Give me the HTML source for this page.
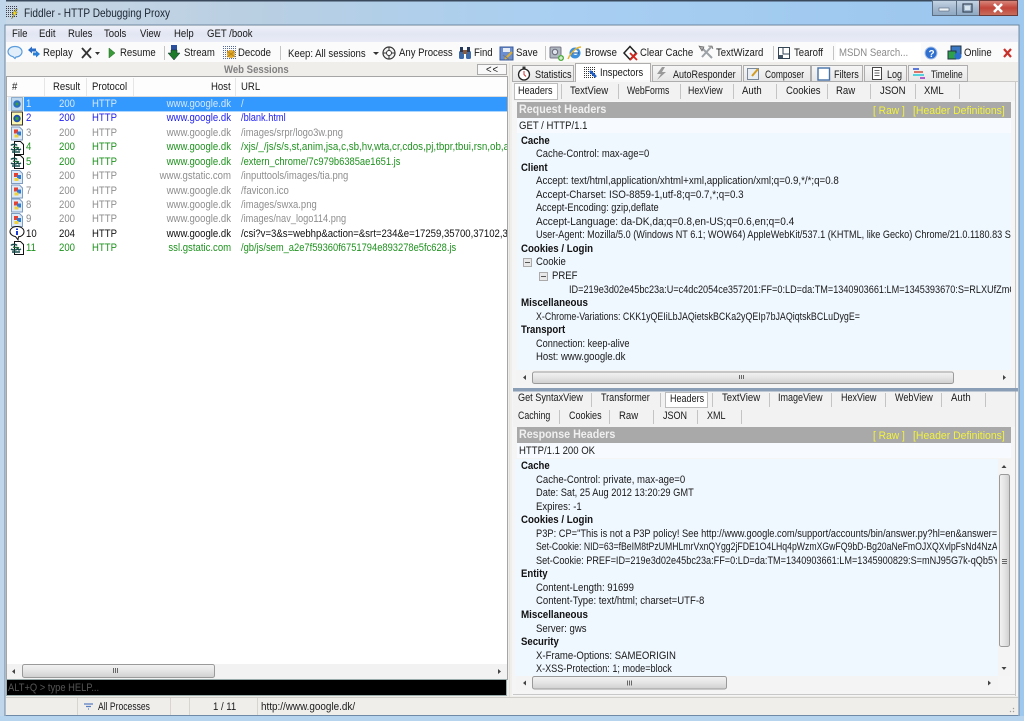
<!DOCTYPE html>
<html><head><meta charset="utf-8"><title>Fiddler - HTTP Debugging Proxy</title>
<style>
html,body{margin:0;padding:0;width:1024px;height:721px;overflow:hidden;background:#a9cdee}
#p{position:relative;width:1024px;height:721px;overflow:hidden;filter:blur(.35px);font-family:"Liberation Sans",sans-serif;font-size:11px;color:#1a1a1a}
svg.bg{position:absolute;left:0;top:0}
.t{position:absolute;white-space:nowrap;line-height:14px;height:14px;transform-origin:0 50%;transform:scaleX(.87)}
.r{transform-origin:100% 50%;text-align:right}
.b{font-weight:bold;color:#111}
.c{position:absolute;left:0;top:0;width:1024px;height:721px}
.w{color:#d4e8ff}.u{color:#2222ee}.g{color:#8e8e8e}.n{color:#1f921f}.k{color:#111}
.y{color:#f2f23c}.h{color:#f0f0f0;font-weight:bold;font-size:11.5px}
</style></head><body><div id="p">
<svg class="bg" width="1024" height="721" viewBox="0 0 1024 721">
<defs>
<linearGradient id="tb" x1="0" y1="0" x2="1" y2="0"><stop offset="0" stop-color="#c9d8e6"/><stop offset=".25" stop-color="#b9cfe2"/><stop offset=".55" stop-color="#a8cff2"/><stop offset="1" stop-color="#9cc6ee"/></linearGradient>
<linearGradient id="mn" x1="0" y1="0" x2="0" y2="1"><stop offset="0" stop-color="#eff1f9"/><stop offset=".5" stop-color="#e2e6f3"/><stop offset="1" stop-color="#e9ecf6"/></linearGradient>
<linearGradient id="sc" x1="0" y1="0" x2="0" y2="1"><stop offset="0" stop-color="#f3f3f3"/><stop offset=".5" stop-color="#e4e4e4"/><stop offset="1" stop-color="#cfcfcf"/></linearGradient>
<linearGradient id="sv" x1="0" y1="0" x2="1" y2="0"><stop offset="0" stop-color="#f3f3f3"/><stop offset=".5" stop-color="#e4e4e4"/><stop offset="1" stop-color="#cfcfcf"/></linearGradient>
<linearGradient id="cl" x1="0" y1="0" x2="0" y2="1"><stop offset="0" stop-color="#d98a80"/><stop offset=".5" stop-color="#c2453a"/><stop offset="1" stop-color="#c8705f"/></linearGradient>
<linearGradient id="bt" x1="0" y1="0" x2="0" y2="1"><stop offset="0" stop-color="#c5d5e5"/><stop offset=".5" stop-color="#a5b9cf"/><stop offset="1" stop-color="#8ea7c2"/></linearGradient>
<linearGradient id="tabg" x1="0" y1="0" x2="0" y2="1"><stop offset="0" stop-color="#f6f6f6"/><stop offset="1" stop-color="#e6e6e6"/></linearGradient>
<symbol id="doc" viewBox="0 0 12 14"><path d="M.5.500h8l3 3v10h-11z" fill="#dce9f7" stroke="#7d9cc2"/><rect x="3" y="3" width="4" height="4" fill="#e8402c"/><rect x="6" y="5" width="4" height="4" fill="#2a7ad8"/><rect x="3.500" y="8" width="4" height="3" fill="#f0d23a"/></symbol>
<symbol id="js" viewBox="0 0 14 14"><path d="M4.500.500h6l3 3v10h-9z" fill="#fff" stroke="#111"/><path d="M1 4.500c1-1.500 5-1.500 6 0M1 8c2 1.500 5 1 7 0M7 7l2 2 2-1M2 11h8" fill="none" stroke="#164a4a" stroke-width="1.500"/><path d="M3 6c2 1 4 0 6 1" stroke="#1f6a3a" fill="none" stroke-width="1.500"/></symbol>
</defs>
<!-- window frame -->
<rect width="1024" height="721" fill="#a9cdee"/>
<rect width="1024" height="26" fill="url(#tb)"/>
<rect width="1024" height="1.500" fill="#3a4a5c"/>
<rect x="0" y="0" width="6" height="721" fill="#c0d6ea"/>
<rect x="1018" y="0" width="6" height="721" fill="#9fc8ee"/>
<rect x="5" y="25" width="1014" height="691" fill="#f0eeeb" stroke="#6e88a2"/>
<rect x="0" y="716" width="1024" height="5" fill="#b6d4ee"/>
<!-- caption buttons -->
<rect x="932.500" y=".5" width="24" height="15" fill="url(#bt)" stroke="#5d6f84"/>
<rect x="956.500" y=".5" width="23" height="15" fill="url(#bt)" stroke="#5d6f84"/>
<rect x="979.500" y=".5" width="38" height="15" fill="url(#cl)" stroke="#6d3a3a"/>
<rect x="939" y="8" width="10" height="3" fill="#eef3f8" stroke="#55657a" stroke-width=".6"/>
<rect x="963" y="4" width="9" height="8" fill="none" stroke="#39485a" stroke-width="1.200"/><rect x="965" y="6" width="5" height="4" fill="#d8e4ee"/>
<path d="M994 4l8 8M1002 4l-8 8" stroke="#fff" stroke-width="2.600"/>
<!-- title icon -->
<path d="M6 6.500h12M6 8.500h12M6 10.500h12M6 12.500h12M6 14.500h12M6 16.500h12" stroke="#3c3c4c" stroke-dasharray="1 1"/>
<path d="M16 9l-4 5h2l-2.500 5 6-7h-2.500l2.500-3z" fill="#f6d814" stroke="#554" stroke-width=".4"/>
<!-- menu + toolbar -->
<rect x="6" y="26" width="1012" height="16" fill="url(#mn)"/>
<rect x="6" y="42" width="1012" height="20" fill="#fbfbfb"/>
<rect x="6" y="62" width="1012" height="2" fill="#f0eeeb"/>
<path d="M164.500 46v14M280.500 46v14M545.500 46v14M773.500 46v14M833.500 46v14" stroke="#c4c4c4"/>
<rect x="836" y="43" width="85" height="19" fill="#fff"/>
<!-- toolbar icons -->
<path d="M15 46.500c4 0 7 2.300 7 5.300s-3 5.200-6 5.200l-1 1.500-2-1.800c-3-.8-5-2.500-5-4.900 0-3 3-5.300 7-5.300z" fill="#e2effb" stroke="#5b9cdc" stroke-width="1.200"/>
<path d="M28 50l4-3.500v2h4v3h-4v2z" fill="#2a6ec8"/><path d="M40 54l-4 3.500v-2h-3v-3h3v-2z" fill="#2a80d8"/>
<path d="M82 48l9 10M91 48l-9 10" stroke="#333" stroke-width="1.800"/>
<path d="M95 52h5l-2.500 3z" fill="#333"/>
<path d="M109 48l6 5-6 5z" fill="#3a9a3a" stroke="#1f6b1f" stroke-width=".5"/>
<rect x="171" y="45" width="6" height="5" fill="#2a4f9c"/><path d="M171 50h6v3h3l-6 7-6-7h3z" fill="#1d7a2a" stroke="#123" stroke-width=".5"/>
<path d="M223 46.500h13M223 48.500h13M223 50.500h13M223 52.500h13M223 54.500h13M223 56.500h13M223 58.500h13" stroke="#56699c" stroke-dasharray="1 1"/><circle cx="231" cy="54" r="4" fill="#e2a82a"/><path d="M227 51l8 6M235 51l-8 6" stroke="#b88412"/>
<path d="M373 52h6l-3 3z" fill="#333"/>
<circle cx="389" cy="53" r="6" fill="#f4f4f4" stroke="#333" stroke-width="1.200"/><path d="M389 47v12M383 53h12" stroke="#333"/><circle cx="389" cy="53" r="2.500" fill="#fff" stroke="#333"/>
<rect x="459" y="51" width="5" height="8" rx="1.500" fill="#3f6aa8"/><rect x="466" y="51" width="5" height="8" rx="1.500" fill="#3f6aa8"/><rect x="460" y="47" width="3" height="5" fill="#26385a"/><rect x="467" y="47" width="3" height="5" fill="#26385a"/><rect x="463" y="50" width="4" height="4" fill="#8a5a3a"/>
<rect x="500" y="47" width="13" height="13" fill="#6a8ed0" stroke="#3a5a9a"/><rect x="503" y="48" width="7" height="4" fill="#e6ecf6"/><path d="M505 59l7-7" stroke="#e0b030" stroke-width="2"/><path d="M503 55l7 5" stroke="#777"/>
<rect x="550" y="47" width="11" height="11" rx="1" fill="#aeb6be" stroke="#778"/><circle cx="555" cy="52" r="2.700" fill="#dfe4ea" stroke="#667"/><circle cx="561" cy="58" r="3" fill="#4cae3a"/><path d="M559 58h4M561 56v4" stroke="#fff"/>
<circle cx="575" cy="53" r="5.500" fill="#3d8fdc"/><circle cx="575.500" cy="52.500" r="2.500" fill="#fff"/><path d="M571 53h8" stroke="#1d5fa8" stroke-width="1.200"/><path d="M568 59c3-7 9-12 13-12" fill="none" stroke="#e8b530" stroke-width="1.500"/>
<path d="M624 53l6-6.500 6 6.500-6 6.500z" fill="#fff" stroke="#222" stroke-width="1.500"/><path d="M630 53l7 7M637 53l-7 7" stroke="#d8261c" stroke-width="1.800"/>
<path d="M702 48l10 10M711 47l-9 10" stroke="#9ca2a8" stroke-width="2"/><path d="M699 46l5 1-2 4zM708 46l4 0 1 3" fill="#aaa" stroke="#555" stroke-width=".6"/>
<rect x="778.500" y="47.500" width="11" height="11" fill="#fff" stroke="#345"/><path d="M783 47v7h7" fill="none" stroke="#345"/><rect x="779" y="55" width="4" height="3" fill="#456"/>
<circle cx="931" cy="53" r="6" fill="#2f6fd0" stroke="#a8c0e8"/><text x="928.500" y="57" fill="#fff" font-family="Liberation Sans" font-size="10" font-weight="bold">?</text>
<rect x="951" y="46" width="10" height="8" fill="#3a78c4" stroke="#234"/><rect x="948" y="51" width="8" height="8" fill="#2fa04a" stroke="#234"/><circle cx="958" cy="56" r="3.500" fill="#2b6fd0"/>
<path d="M1004 49l7 8M1011 49l-7 8" stroke="#c8302a" stroke-width="2.200"/>
<!-- Left pane -->
<rect x="6" y="62" width="502" height="15" fill="#f0eeeb"/>
<rect x="477.500" y="64.500" width="29" height="10" fill="#f8f8f8" stroke="#aaa"/>
<rect x="6.500" y="76.500" width="501" height="603" fill="#fff" stroke="#a5a5a5"/>
<rect x="7" y="77" width="500" height="19" fill="#fdfdfd"/>
<path d="M44.500 78v18M86.500 78v18M133.500 78v18M235.500 78v18" stroke="#e6e6e6"/>
<path d="M7 96.500h500" stroke="#dcdcdc"/>
<rect x="24" y="97" width="483" height="14.400" fill="#3399ff"/>
<rect x="8" y="97" width="16" height="14" fill="#e2eefa"/>
<!-- session icons -->
<rect x="11.500" y="97.500" width="11" height="13" fill="#bcd7ee" stroke="#4a7aa8" stroke-dasharray="1 1"/><circle cx="17" cy="104" r="3.700" fill="#2a6ebd"/><circle cx="17" cy="104" r="1.500" fill="#3f9c3f"/>
<rect x="11.500" y="112" width="11" height="13" fill="#fbf6b0" stroke="#333"/><circle cx="17" cy="118.500" r="3.700" fill="#1e50b0"/><circle cx="17" cy="118.500" r="1.700" fill="#3aa03a"/>
<use href="#doc" x="11" y="126.500" width="12" height="14"/>
<use href="#js" x="10" y="141" width="14" height="14"/>
<use href="#js" x="10" y="155" width="14" height="14"/>
<use href="#doc" x="11" y="170" width="12" height="14"/>
<use href="#doc" x="11" y="184.500" width="12" height="14"/>
<use href="#doc" x="11" y="198.500" width="12" height="14"/>
<use href="#doc" x="11" y="213" width="12" height="14"/>
<path d="M17 226.500c4 0 7 2.300 7 5.200s-3 5.100-5.500 5.100l-.5 3-2.500-3.200c-3-.6-5.500-2.500-5.500-4.900 0-2.900 3-5.200 7-5.200z" fill="#fff" stroke="#111"/><rect x="16" y="231" width="2" height="4" fill="#1a3ad8"/><rect x="16" y="228.500" width="2" height="1.500" fill="#1a3ad8"/>
<use href="#js" x="10" y="241" width="14" height="14"/>
<!-- left scrollbar -->
<rect x="7" y="664" width="500" height="15" fill="#f2f2f2"/>
<rect x="22.500" y="664.500" width="192" height="13" rx="2" fill="url(#sc)" stroke="#9a9a9a"/>
<path d="M113.500 668v5M115.500 668v5M117.500 668v5" stroke="#666"/>
<path d="M15 669l-3 2.500 3 2.500zM498 669l3 2.500-3 2.500z" fill="#444"/>
<!-- quickexec -->
<rect x="6.500" y="679.500" width="500" height="16" fill="#000" stroke="#9aa"/>
<!-- status -->
<rect x="6" y="697" width="1012" height="1" fill="#d0cec9"/>
<path d="M6 715.500h1012" stroke="#6e8aa6"/>
<path d="M77.500 698v17M170.500 698v17M189.500 698v17M257.500 698v17" stroke="#d8d5d0"/>
<path d="M84 704h9M86 706.500h5M88 709h1" stroke="#5a7fc0" stroke-width="1.300"/>
<!-- Right pane -->
<rect x="509" y="63" width="1" height="634" fill="#e4e2de"/>
<rect x="513" y="81.500" width="505" height="1" fill="#a8a8a8"/>
<rect x="512" y="82" width="506" height="614" fill="#f5f5f5"/>
<rect x="1015" y="82" width="1" height="614" fill="#c8c8c8"/>
<rect x="512.500" y="65.500" width="61" height="16" fill="url(#tabg)" stroke="#adadad"/>
<rect x="652.500" y="65.500" width="89" height="16" fill="url(#tabg)" stroke="#adadad"/>
<rect x="743.500" y="65.500" width="67" height="16" fill="url(#tabg)" stroke="#adadad"/>
<rect x="811.500" y="65.500" width="51" height="16" fill="url(#tabg)" stroke="#adadad"/>
<rect x="864.500" y="65.500" width="42" height="16" fill="url(#tabg)" stroke="#adadad"/>
<rect x="908.500" y="65.500" width="59" height="16" fill="url(#tabg)" stroke="#adadad"/>
<rect x="575.500" y="63.500" width="75" height="19" fill="#fff" stroke="#adadad"/><rect x="576" y="80" width="74" height="4" fill="#f8f8f8"/>
<!-- tab icons -->
<circle cx="524" cy="74.500" r="5.500" fill="#fff" stroke="#222" stroke-width="1.300"/><path d="M524 71v3.500l2 2" stroke="#c33" fill="none"/><rect x="522.500" y="66.500" width="3" height="2" fill="#333"/>
<path d="M584 67.500h12M584 69.500h12M584 71.500h12M584 73.500h12M584 75.500h12M584 77.500h12" stroke="#333" stroke-dasharray="1 1"/><path d="M590 71l6 6" stroke="#1a5dc8" stroke-width="2.500"/>
<path d="M662 67l-5 7h4l-4 6 9-8h-4l3-5z" fill="#9a9a9a"/>
<rect x="747.500" y="68.500" width="11" height="11" fill="#e8eef4" stroke="#7a8a9a"/><path d="M752 76l6-7" stroke="#d49b20" stroke-width="2"/>
<rect x="818" y="68" width="11.500" height="12" fill="#fff" stroke="#4672a8" stroke-width="1.400"/>
<rect x="872.500" y="67.500" width="9" height="12" fill="#fff" stroke="#444"/><path d="M874.500 70.500h5M874.500 73h5M874.500 75.500h5" stroke="#666"/>
<path d="M913 69h6" stroke="#2a4fd0" stroke-width="1.500"/><path d="M914 72h9" stroke="#d04a3a" stroke-width="1.500"/><path d="M913 75h11" stroke="#22c8d8" stroke-width="1.500"/><path d="M920 78h5" stroke="#a030c0" stroke-width="1.500"/>
<!-- request inspector -->
<rect x="513" y="82" width="502" height="19" fill="#f2f2f2"/>
<rect x="514.500" y="83.500" width="43" height="16" fill="#fff" stroke="#bdbdbd"/>
<path d="M561.500 84v15M618.500 84v15M680.500 84v15M733.500 84v15M776.500 84v15M827.500 84v15M870.500 84v15M915.500 84v15M959.500 84v15" stroke="#c4c4c4"/>
<rect x="517" y="102" width="494" height="16" fill="#a9a9a9"/>
<rect x="517" y="118" width="494" height="15" fill="#f7fbff"/>
<rect x="517" y="133" width="494" height="237" fill="#eff7ff"/>
<rect x="516" y="370" width="495" height="15" fill="#f4f4f4"/>
<rect x="532.500" y="372" width="421" height="11.500" rx="2" fill="url(#sc)" stroke="#9a9a9a"/>
<path d="M739.500 375v4M741.500 375v4M743.500 375v4" stroke="#666"/>
<path d="M526 375l-3 2.500 3 2.500zM1003 375l3 2.500-3 2.500z" fill="#444"/>
<rect x="523.500" y="258.500" width="8" height="8" fill="#e8e8e8" stroke="#aaa"/><path d="M525 262.500h5" stroke="#555"/>
<rect x="539.500" y="272.500" width="8" height="8" fill="#e8e8e8" stroke="#aaa"/><path d="M541 276.500h5" stroke="#555"/>
<!-- splitter -->
<rect x="513" y="388" width="505" height="3.500" fill="#8a9fb5"/>
<!-- response inspector -->
<rect x="513" y="391.500" width="502" height="35.500" fill="#f2f2f2"/>
<rect x="665.500" y="392.500" width="42" height="15" fill="#fff" stroke="#bdbdbd"/>
<path d="M591.500 393v14M660.500 393v14M712.500 393v14M769.500 393v14M831.500 393v14M885.500 393v14M941.500 393v14M985.500 393v14M559.500 410v14M609.500 410v14M653.500 410v14M697.500 410v14M741.500 410v14" stroke="#c4c4c4"/>
<rect x="517" y="427" width="494" height="16" fill="#a9a9a9"/>
<rect x="517" y="443" width="494" height="15" fill="#f7fbff"/>
<rect x="515" y="459" width="483" height="217" fill="#eff7ff"/>
<rect x="998" y="459" width="13" height="217" fill="#f4f4f4"/>
<rect x="999.500" y="474.500" width="10" height="172" rx="2" fill="url(#sv)" stroke="#9a9a9a"/>
<path d="M1002 559.500h5M1002 561.500h5M1002 563.500h5" stroke="#666"/>
<path d="M1001.500 468l2.500-3 2.500 3zM1001.500 667l2.500 3 2.500-3z" fill="#444"/>
<rect x="516" y="676" width="482" height="15" fill="#f4f4f4"/>
<rect x="532.500" y="676.500" width="194" height="12.500" rx="2" fill="url(#sc)" stroke="#9a9a9a"/>
<path d="M627.500 680.500v5M629.500 680.500v5M631.500 680.500v5" stroke="#666"/>
<path d="M526 680.500l-3 2.500 3 2.500zM988 680.500l3 2.500-3 2.500z" fill="#444"/>
<path d="M513 694.500h502" stroke="#c8c8c8"/>
<path d="M1013 712l1-1M1010 712l1-1M1013 709l1-1" stroke="#999"/>
</svg>

<div class="t" style="left:24px;top:6px;font-size:12px;transform:scaleX(.84);color:#1b2430">Fiddler - HTTP Debugging Proxy</div>
<div class="t" style="left:12px;top:27px">File</div>
<div class="t" style="left:39px;top:27px">Edit</div>
<div class="t" style="left:68px;top:27px">Rules</div>
<div class="t" style="left:104px;top:27px">Tools</div>
<div class="t" style="left:140px;top:27px">View</div>
<div class="t" style="left:174px;top:27px">Help</div>
<div class="t" style="left:207px;top:27px">GET /book</div>

<div class="t" style="left:43px;top:46px">Replay</div>
<div class="t" style="left:120px;top:46px">Resume</div>
<div class="t" style="left:184px;top:46px">Stream</div>
<div class="t" style="left:238px;top:46px">Decode</div>
<div class="t" style="left:288px;top:47px">Keep: All sessions</div>
<div class="t" style="left:399px;top:46px">Any Process</div>
<div class="t" style="left:474px;top:46px">Find</div>
<div class="t" style="left:516px;top:46px">Save</div>
<div class="t" style="left:585px;top:46px">Browse</div>
<div class="t" style="left:640px;top:46px">Clear Cache</div>
<div class="t" style="left:716px;top:46px">TextWizard</div>
<div class="t" style="left:794px;top:46px">Tearoff</div>
<div class="t" style="left:839px;top:46px;color:#8a8a8a">MSDN Search...</div>
<div class="t" style="left:964px;top:46px">Online</div>

<div class="t b" style="left:224px;top:63px;color:#808080">Web Sessions</div>
<div class="t" style="left:486px;top:63px;letter-spacing:1px">&lt;&lt;</div>

<div class="t" style="left:12px;top:80px">#</div>
<div class="t" style="left:53px;top:80px">Result</div>
<div class="t" style="left:92px;top:80px">Protocol</div>
<div class="t r" style="right:793px;top:80px">Host</div>
<div class="t" style="left:241px;top:80px">URL</div>

<div class="c" style="clip-path:inset(0 517px 0 0)">
<div class="w">
<div class="t" style="left:26px;top:97px">1</div><div class="t" style="left:59px;top:97px">200</div><div class="t" style="left:92px;top:97px">HTTP</div><div class="t r" style="right:793px;top:97px">www.google.dk</div><div class="t" style="left:241px;top:97px">/</div>
</div>
<div class="u">
<div class="t" style="left:26px;top:111px">2</div><div class="t" style="left:59px;top:111px">200</div><div class="t" style="left:92px;top:111px">HTTP</div><div class="t r" style="right:793px;top:111px">www.google.dk</div><div class="t" style="left:241px;top:111px;transform:scaleX(.84)">/blank.html</div>
</div>
<div class="g">
<div class="t" style="left:26px;top:126px">3</div><div class="t" style="left:59px;top:126px">200</div><div class="t" style="left:92px;top:126px">HTTP</div><div class="t r" style="right:793px;top:126px">www.google.dk</div><div class="t" style="left:241px;top:126px;transform:scaleX(.855)">/images/srpr/logo3w.png</div>
</div>
<div class="n">
<div class="t" style="left:26px;top:140px">4</div><div class="t" style="left:59px;top:140px">200</div><div class="t" style="left:92px;top:140px">HTTP</div><div class="t r" style="right:793px;top:140px">www.google.dk</div><div class="t" style="left:241px;top:140px;transform:scaleX(.89)">/xjs/_/js/s/s,st,anim,jsa,c,sb,hv,wta,cr,cdos,pj,tbpr,tbui,rsn,ob,async</div>
<div class="t" style="left:26px;top:155px">5</div><div class="t" style="left:59px;top:155px">200</div><div class="t" style="left:92px;top:155px">HTTP</div><div class="t r" style="right:793px;top:155px">www.google.dk</div><div class="t" style="left:241px;top:155px;transform:scaleX(.849)">/extern_chrome/7c979b6385ae1651.js</div>
</div>
<div class="g">
<div class="t" style="left:26px;top:169px">6</div><div class="t" style="left:59px;top:169px">200</div><div class="t" style="left:92px;top:169px">HTTP</div><div class="t r" style="right:793px;top:169px">www.gstatic.com</div><div class="t" style="left:241px;top:169px;transform:scaleX(.86)">/inputtools/images/tia.png</div>
<div class="t" style="left:26px;top:184px">7</div><div class="t" style="left:59px;top:184px">200</div><div class="t" style="left:92px;top:184px">HTTP</div><div class="t r" style="right:793px;top:184px">www.google.dk</div><div class="t" style="left:241px;top:184px">/favicon.ico</div>
<div class="t" style="left:26px;top:198px">8</div><div class="t" style="left:59px;top:198px">200</div><div class="t" style="left:92px;top:198px">HTTP</div><div class="t r" style="right:793px;top:198px">www.google.dk</div><div class="t" style="left:241px;top:198px;transform:scaleX(.86)">/images/swxa.png</div>
<div class="t" style="left:26px;top:212px">9</div><div class="t" style="left:59px;top:212px">200</div><div class="t" style="left:92px;top:212px">HTTP</div><div class="t r" style="right:793px;top:212px">www.google.dk</div><div class="t" style="left:241px;top:212px;transform:scaleX(.84)">/images/nav_logo114.png</div>
</div>
<div class="k">
<div class="t" style="left:26px;top:227px">10</div><div class="t" style="left:59px;top:227px">204</div><div class="t" style="left:92px;top:227px">HTTP</div><div class="t r" style="right:793px;top:227px">www.google.dk</div><div class="t" style="left:241px;top:227px">/csi?v=3&amp;s=webhp&amp;action=&amp;srt=234&amp;e=17259,35700,37102,39</div>
</div>
<div class="n">
<div class="t" style="left:26px;top:241px">11</div><div class="t" style="left:59px;top:241px">200</div><div class="t" style="left:92px;top:241px">HTTP</div><div class="t r" style="right:793px;top:241px">ssl.gstatic.com</div><div class="t" style="left:241px;top:241px;transform:scaleX(.85)">/gb/js/sem_a2e7f59360f6751794e893278e5fc628.js</div>
</div>
</div>

<div class="t" style="left:8px;top:681px;color:#555;transform:scaleX(.85)">ALT+Q &gt; type HELP...</div>
<div class="t" style="left:98px;top:700px;transform:scaleX(.78)">All Processes</div>
<div class="t" style="left:213px;top:700px">1 / 11</div>
<div class="t" style="left:261px;top:700px;transform:scaleX(.9)">http://www.google.dk/</div>

<!-- main tabs -->
<div class="t" style="left:535px;top:68px;transform:scaleX(.83)">Statistics</div>
<div class="t" style="left:600px;top:66px;transform:scaleX(.85)">Inspectors</div>
<div class="t" style="left:673px;top:68px;transform:scaleX(.82)">AutoResponder</div>
<div class="t" style="left:765px;top:68px;transform:scaleX(.77)">Composer</div>
<div class="t" style="left:834px;top:68px;transform:scaleX(.83)">Filters</div>
<div class="t" style="left:887px;top:68px;transform:scaleX(.82)">Log</div>
<div class="t" style="left:931px;top:68px;transform:scaleX(.77)">Timeline</div>

<div class="t" style="left:518px;top:84px;transform:scaleX(.83)">Headers</div>
<div class="t" style="left:570px;top:84px">TextView</div>
<div class="t" style="left:627px;top:84px;transform:scaleX(.79)">WebForms</div>
<div class="t" style="left:688px;top:84px;transform:scaleX(.8)">HexView</div>
<div class="t" style="left:742px;top:84px">Auth</div>
<div class="t" style="left:786px;top:84px">Cookies</div>
<div class="t" style="left:836px;top:84px">Raw</div>
<div class="t" style="left:880px;top:84px">JSON</div>
<div class="t" style="left:924px;top:84px">XML</div>

<div class="t h" style="left:519px;top:103px;transform:scaleX(.93)">Request Headers</div>
<div class="t y" style="left:873px;top:104px;transform:scaleX(.93)">[ Raw ]</div>
<div class="t y" style="left:913px;top:104px;transform:scaleX(.95)">[Header Definitions]</div>
<div class="t" style="left:519px;top:119px">GET / HTTP/1.1</div>

<div class="c" style="clip-path:inset(0 13px 0 0)">
<div class="t b" style="left:521px;top:134px">Cache</div>
<div class="t" style="left:536px;top:147px;transform:scaleX(.855)">Cache-Control: max-age=0</div>
<div class="t b" style="left:521px;top:161px">Client</div>
<div class="t" style="left:536px;top:174px;transform:scaleX(.885)">Accept: text/html,application/xhtml+xml,application/xml;q=0.9,*/*;q=0.8</div>
<div class="t" style="left:536px;top:188px;transform:scaleX(.891)">Accept-Charset: ISO-8859-1,utf-8;q=0.7,*;q=0.3</div>
<div class="t" style="left:536px;top:201px;transform:scaleX(.843)">Accept-Encoding: gzip,deflate</div>
<div class="t" style="left:536px;top:215px;transform:scaleX(.919)">Accept-Language: da-DK,da;q=0.8,en-US;q=0.6,en;q=0.4</div>
<div class="t" style="left:536px;top:228px;transform:scaleX(.828)">User-Agent: Mozilla/5.0 (Windows NT 6.1; WOW64) AppleWebKit/537.1 (KHTML, like Gecko) Chrome/21.0.1180.83 Safari/537.1</div>
<div class="t b" style="left:521px;top:242px;transform:scaleX(.88)">Cookies / Login</div>
<div class="t" style="left:536px;top:255px">Cookie</div>
<div class="t" style="left:552px;top:269px">PREF</div>
<div class="t" style="left:569px;top:283px;transform:scaleX(.83)">ID=219e3d02e45bc23a:U=c4dc2054ce357201:FF=0:LD=da:TM=1340903661:LM=1345393670:S=RLXUfZmQ</div>
<div class="t b" style="left:521px;top:296px;transform:scaleX(.89)">Miscellaneous</div>
<div class="t" style="left:536px;top:310px;transform:scaleX(.805)">X-Chrome-Variations: CKK1yQEIiLbJAQietskBCKa2yQEIp7bJAQiqtskBCLuDygE=</div>
<div class="t b" style="left:521px;top:323px">Transport</div>
<div class="t" style="left:536px;top:337px;transform:scaleX(.835)">Connection: keep-alive</div>
<div class="t" style="left:536px;top:350px">Host: www.google.dk</div>
</div>

<div class="t" style="left:518px;top:391px;transform:scaleX(.83)">Get SyntaxView</div>
<div class="t" style="left:601px;top:391px;transform:scaleX(.82)">Transformer</div>
<div class="t" style="left:670px;top:392px;transform:scaleX(.82)">Headers</div>
<div class="t" style="left:722px;top:391px">TextView</div>
<div class="t" style="left:778px;top:391px;transform:scaleX(.82)">ImageView</div>
<div class="t" style="left:841px;top:391px;transform:scaleX(.82)">HexView</div>
<div class="t" style="left:895px;top:391px;transform:scaleX(.82)">WebView</div>
<div class="t" style="left:951px;top:391px">Auth</div>
<div class="t" style="left:518px;top:409px;transform:scaleX(.8)">Caching</div>
<div class="t" style="left:569px;top:409px;transform:scaleX(.82)">Cookies</div>
<div class="t" style="left:619px;top:409px">Raw</div>
<div class="t" style="left:663px;top:409px;transform:scaleX(.82)">JSON</div>
<div class="t" style="left:707px;top:409px;transform:scaleX(.82)">XML</div>

<div class="t h" style="left:519px;top:428px;transform:scaleX(.93)">Response Headers</div>
<div class="t y" style="left:873px;top:429px;transform:scaleX(.93)">[ Raw ]</div>
<div class="t y" style="left:913px;top:429px;transform:scaleX(.95)">[Header Definitions]</div>
<div class="t" style="left:519px;top:444px">HTTP/1.1 200 OK</div>

<div class="c" style="clip-path:inset(0 27px 0 0)">
<div class="t b" style="left:521px;top:459px">Cache</div>
<div class="t" style="left:536px;top:473px">Cache-Control: private, max-age=0</div>
<div class="t" style="left:536px;top:486px;transform:scaleX(.843)">Date: Sat, 25 Aug 2012 13:20:29 GMT</div>
<div class="t" style="left:536px;top:500px">Expires: -1</div>
<div class="t b" style="left:521px;top:513px;transform:scaleX(.88)">Cookies / Login</div>
<div class="t" style="left:536px;top:527px;transform:scaleX(.845)">P3P: CP="This is not a P3P policy! See http://www.google.com/support/accounts/bin/answer.py?hl=en&amp;answer=151657"</div>
<div class="t" style="left:536px;top:540px;transform:scaleX(.79)">Set-Cookie: NID=63=fBeIM8tPzUMHLmrVxnQYgg2jFDE1O4LHq4pWzmXGwFQ9bD-Bg20aNeFmOJXQXvlpFsNd4NzAbc</div>
<div class="t" style="left:536px;top:554px;transform:scaleX(.83)">Set-Cookie: PREF=ID=219e3d02e45bc23a:FF=0:LD=da:TM=1340903661:LM=1345900829:S=mNJ95G7k-qQb5YAbc</div>
<div class="t b" style="left:521px;top:567px">Entity</div>
<div class="t" style="left:536px;top:581px">Content-Length: 91699</div>
<div class="t" style="left:536px;top:594px">Content-Type: text/html; charset=UTF-8</div>
<div class="t b" style="left:521px;top:608px;transform:scaleX(.89)">Miscellaneous</div>
<div class="t" style="left:536px;top:622px">Server: gws</div>
<div class="t b" style="left:521px;top:635px">Security</div>
<div class="t" style="left:536px;top:649px">X-Frame-Options: SAMEORIGIN</div>
<div class="t" style="left:536px;top:662px;transform:scaleX(.827)">X-XSS-Protection: 1; mode=block</div>
</div>
</div></body></html>
